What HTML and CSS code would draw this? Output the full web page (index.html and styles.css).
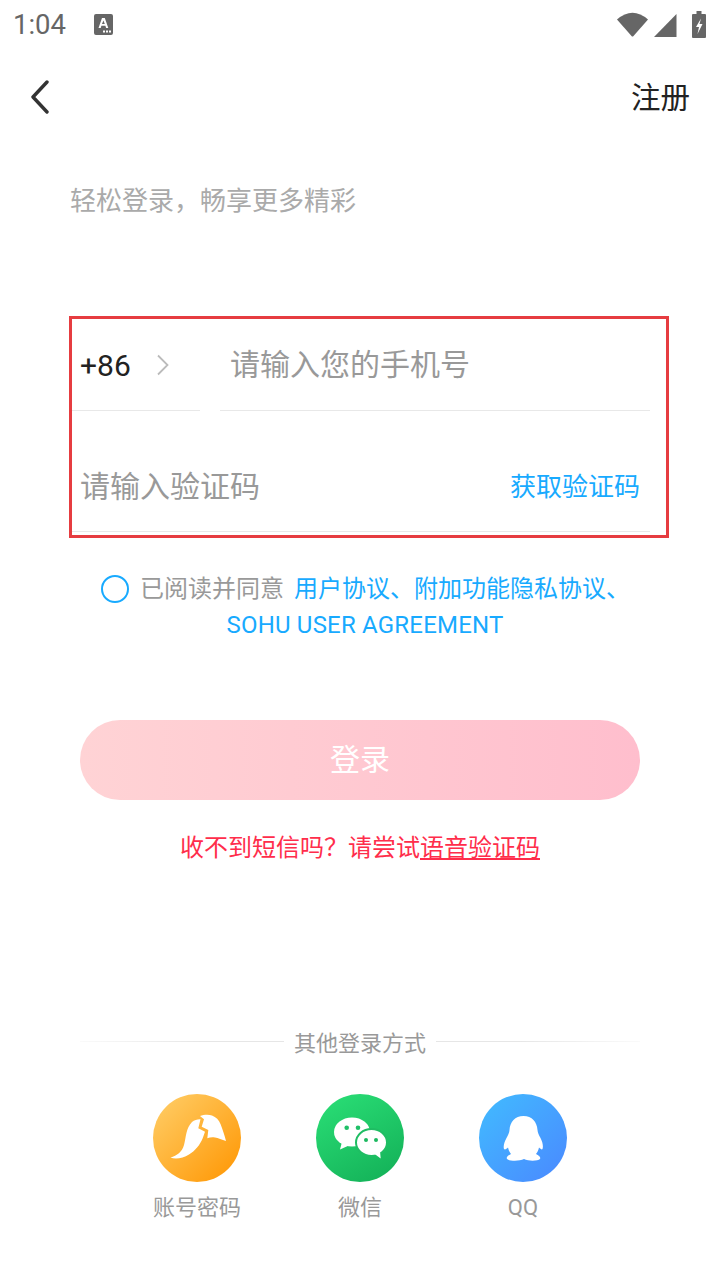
FILE: index.html
```html
<!DOCTYPE html>
<html lang="zh-CN">
<head>
  <meta charset="UTF-8"/>
  <meta content="width=device-width, initial-scale=1.0" name="viewport"/>
  <title>登录</title>
  <link rel="stylesheet" href="styles.css">
</head>
<body>
<div class="page">
  <div class="status-bar">
    <span class="clock">1:04</span>
    <svg class="status-a" width="19" height="21" viewBox="0 0 19 21">
      <path fill="#666" fill-rule="evenodd" d="M2 0h15a2 2 0 0 1 2 2v17a2 2 0 0 1-2 2H2a2 2 0 0 1-2-2V2a2 2 0 0 1 2-2zM8 4 4.500 14h2.200l.7-2.200h4l.7 2.200h2.200L10.800 4zM9.400 6.500 10.800 10H8z"/>
      <rect x="9" y="16.500" width="2" height="2" fill="#fff"/><rect x="12" y="16.500" width="2" height="2" fill="#fff"/><rect x="15" y="16.500" width="2" height="2" fill="#fff"/>
    </svg>
    <span class="status-right">
      <svg class="wifi" width="31" height="26" viewBox="0 0 31 26"><path fill="#666" d="M0 8.500Q15.500-5 31 8.500L16.500 25q-1 1-2 0z"/></svg>
      <svg class="signal" width="23" height="23" viewBox="0 0 23 23"><path fill="#666" d="M22.500 0v23H0z"/></svg>
      <svg width="14" height="27" viewBox="0 0 14 27"><path fill="#666" fill-rule="evenodd" d="M4.500 0h5v3H13a1 1 0 0 1 1 1v22a1 1 0 0 1-1 1H1a1 1 0 0 1-1-1V4a1 1 0 0 1 1-1h3.500zM9 7.500 4 16h3l-1.500 7 5-10H7.500z"/></svg>
    </span>
  </div>

  <div class="nav">
    <svg width="20" height="34" viewBox="0 0 20 34"><path d="M17 2 3 17l14 15" fill="none" stroke="#333" stroke-width="3.400" stroke-linecap="round" stroke-linejoin="round"/></svg>
    <span class="nav-link">注册</span>
  </div>

  <div class="slogan">轻松登录，畅享更多精彩</div>

  <div class="form">
    <div class="form-row">
      <div class="country">
        <span class="code">+86</span>
        <svg width="14" height="22" viewBox="0 0 14 22"><path d="M2 1.500 11.500 11 2 20.500" fill="none" stroke="#bbb" stroke-width="1.800"/></svg>
      </div>
      <div class="phone">请输入您的手机号</div>
    </div>
    <div class="form-row code-row">
      <span class="placeholder">请输入验证码</span>
      <span class="get-code">获取验证码</span>
    </div>
  </div>

  <div class="agreement">
    <div class="agree-line">
      <span class="radio"></span>
      <span class="agree-text">已阅读并同意</span>
      <span class="agree-link">用户协议、附加功能隐私协议、</span>
    </div>
    <div class="agree-link agree-en">SOHU USER AGREEMENT</div>
  </div>

  <div class="login-btn">登录</div>

  <div class="voice-tip">收不到短信吗？请尝试<u>语音验证码</u></div>

  <div class="other-title">
    <span class="line line-left"></span>
    <span>其他登录方式</span>
    <span class="line line-right"></span>
  </div>

  <div class="other-list">
    <div class="other-item">
      <span class="badge badge-orange">
        <svg width="88" height="88" viewBox="0 0 88 88">
          <path fill="#fff" d="M17.500 63.500C24 61.500 29 58 31 51 33 43 33 34 39 28 41.500 26 45 25 47.500 25.300L45.300 34.300 52 37.700 49.700 44.300C47 51 42 57 36 60.500 30 64.500 22 65.500 17.500 63.500z"/>
          <path fill="#fff" d="M47 22C51 20.500 56 20.500 59 21.500 63 23 66 26 67.500 30 69.500 35 71.500 41 73 47 69 45.500 65 44 62 43.500 59 43 56.500 43.500 54.300 44.300L55.300 36 48.700 32.700 51 25.300z"/>
        </svg>
      </span>
      <span class="other-label">账号密码</span>
    </div>
    <div class="other-item">
      <span class="badge badge-green">
        <svg width="88" height="88" viewBox="0 0 88 88">
          <ellipse cx="36" cy="38" rx="18" ry="14.500" fill="#fff"/>
          <path fill="#fff" d="M26 48 24 55.500 34 51z"/>
          <circle cx="30.700" cy="33.700" r="2.300" fill="#1fc067"/>
          <circle cx="42" cy="33.700" r="2.300" fill="#1fc067"/>
          <ellipse cx="55.500" cy="48.500" rx="15.500" ry="13.500" fill="#fff" stroke="#1fbd63" stroke-width="2"/>
          <path fill="#fff" d="M58 59.500 64.700 64.500 64 57z"/>
          <circle cx="50" cy="46" r="2" fill="#1cb85f"/>
          <circle cx="60" cy="46" r="2" fill="#1cb85f"/>
        </svg>
      </span>
      <span class="other-label">微信</span>
    </div>
    <div class="other-item">
      <span class="badge badge-blue">
        <svg width="88" height="88" viewBox="0 0 88 88">
          <path fill="#fff" d="M44.500 22C53 22 58 28 58.500 36 58.700 39 60 41 61.500 44 63.500 48 64.500 52 63.500 55 63 56 61.500 55 60 53.500 59.500 56 58.500 58 57 60 60 61.500 62 63 61 65 59 67 50 67.500 45 65 40 67.500 30 67 28 65 27 63 29 61.500 32 60 30.500 58 29.500 56 29 53.500 27.500 55 26 56 25 55 24 52 25.500 48 27.500 44 29 41 30.300 39 30.500 36 31 28 36 22 44.500 22z"/>
        </svg>
      </span>
      <span class="other-label">QQ</span>
    </div>
  </div>
</div>
</body>
</html>
```

FILE: styles.css
```css
* {
  box-sizing: border-box;
}
body {
  font-family: Roboto, "Noto Sans CJK SC", sans-serif;
  margin: 0;
  background-color: #fff;
  color: #333;
}
.page {
  width: 720px;
  height: 1280px;
  overflow: hidden;
}
.status-bar {
  display: flex;
  align-items: center;
  height: 48px;
  padding: 0 14px 0 13px;
}
.clock {
  width: 81px;
  font-size: 27.500px;
  color: #666;
}
.status-right {
  display: flex;
  align-items: center;
  margin-left: auto;
}
.wifi {
  margin-top: -1px;
  margin-right: 6px;
}
.signal {
  margin-top: 2px;
  margin-right: 15px;
}
.nav {
  display: flex;
  align-items: center;
  justify-content: space-between;
  height: 98px;
  padding: 0 30px;
}
.nav-link {
  margin-top: -4px;
  font-size: 29.500px;
  color: #222;
}
.slogan {
  margin: 36px 0 0 70px;
  font-size: 26px;
  line-height: 38px;
  color: #aaa;
}
.form {
  width: 600px;
  height: 222px;
  margin: 96px 0 0 69px;
  padding-top: 2px;
  border: 3px solid #e63c40;
}
.form-row {
  display: flex;
  align-items: center;
}
.country {
  display: flex;
  align-items: center;
  width: 128px;
  height: 90px;
  padding: 0 0 1px 8px;
  border-bottom: 1px solid #e8e8e8;
}
.code {
  font-size: 30px;
  color: #222;
}
.country svg {
  margin-left: 25px;
}
.phone {
  width: 430px;
  height: 90px;
  margin-left: 20px;
  padding-left: 10px;
  font-size: 30px;
  line-height: 87px;
  color: #999;
  border-bottom: 1px solid #e8e8e8;
}
.code-row {
  justify-content: space-between;
  width: 578px;
  height: 121px;
  padding: 26px 10px 0 8px;
  border-bottom: 1px solid #e8e8e8;
}
.placeholder {
  font-size: 30px;
  color: #999;
}
.get-code {
  font-size: 26px;
  color: #18aaff;
}
.agreement {
  margin-top: 33px;
  text-align: center;
  font-size: 24px;
  line-height: 36px;
}
.agree-line {
  display: flex;
  align-items: center;
  padding-left: 101px;
}
.radio {
  width: 28px;
  height: 28px;
  margin-right: 11px;
  border: 2px solid #18aaff;
  border-radius: 50%;
}
.agree-text {
  margin-right: 10px;
  color: #999;
}
.agree-link {
  color: #18aaff;
}
.agree-en {
  margin-left: 10px;
  letter-spacing: 0.200px;
}
.login-btn {
  width: 560px;
  height: 80px;
  margin: 77px 0 0 80px;
  border-radius: 40px;
  background: linear-gradient(90deg, #ffd3d5, #ffbecd);
  color: #fff;
  font-size: 30px;
  line-height: 80px;
  text-align: center;
}
.voice-tip {
  margin-top: 30px;
  font-size: 24px;
  line-height: 36px;
  color: #ff2d4b;
  text-align: center;
}
.other-title {
  display: flex;
  align-items: center;
  justify-content: center;
  gap: 10px;
  margin-top: 162px;
  font-size: 22px;
  line-height: 32px;
  color: #999;
}
.line {
  width: 204px;
  height: 1px;
  margin-top: -5px;
}
.line-left {
  background: linear-gradient(90deg, #fafafa, #e6e6e6 60%);
}
.line-right {
  background: linear-gradient(90deg, #e6e6e6 40%, #fafafa);
}
.other-list {
  display: flex;
  justify-content: center;
  gap: 75px;
  margin-top: 34px;
}
.other-item {
  display: flex;
  flex-direction: column;
  align-items: center;
  width: 88px;
}
.badge {
  width: 88px;
  height: 88px;
  border-radius: 50%;
}
.badge svg {
  display: block;
}
.badge-orange {
  background: linear-gradient(135deg, #ffcf6a, #ff9500);
}
.badge-green {
  background: linear-gradient(150deg, #2be077, #12ae56);
}
.badge-blue {
  background: linear-gradient(135deg, #41bcff, #4a88ff);
}
.other-label {
  margin-top: 10px;
  font-size: 22px;
  line-height: 32px;
  color: #999;
  white-space: nowrap;
}
```
